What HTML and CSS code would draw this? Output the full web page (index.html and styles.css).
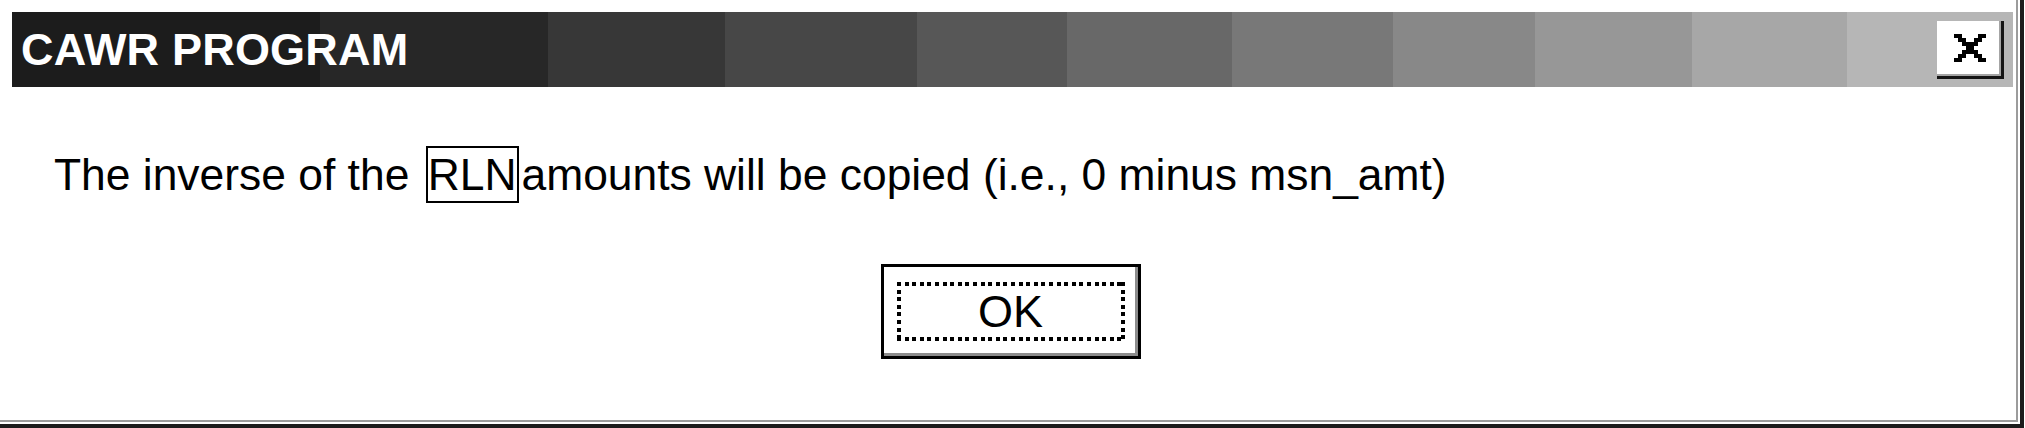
FILE: index.html
```html
<!DOCTYPE html>
<html lang="en">
<head>
<meta charset="utf-8">
<title>CAWR PROGRAM</title>
<link rel="stylesheet" href="styles.css">
</head>
<body>
<div class="window">
  <div class="frame">
    <div class="titlebar">
      <span class="title">CAWR PROGRAM</span>
      <button class="close" aria-label="Close">
        <svg class="close-glyph" viewBox="0 0 8 7" width="35" height="28" shape-rendering="crispEdges">
          <path d="M0 0h2v1H0z M6 0h2v1H6z M1 1h2v1H1z M5 1h2v1H5z M2 2h4v1H2z M3 3h2v1H3z M2 4h4v1H2z M1 5h2v1H1z M5 5h2v1H5z M0 6h2v1H0z M6 6h2v1H6z" fill="#000"/>
        </svg>
      </button>
    </div>
    <div class="body">
      <p class="message">The inverse of the <span class="tag">RLN</span>amounts will be copied (i.e., 0 minus msn_amt)</p>
      <div class="actions">
        <button class="ok"><span class="focus">OK</span></button>
      </div>
    </div>
  </div>
</div>
</body>
</html>
```

FILE: styles.css
```css
html, body {
  margin: 0;
  padding: 0;
  background: #ffffff;
}

body {
  font-family: "Liberation Sans", Arial, sans-serif;
  color: #000;
}

.window {
  width: 2024px;
  height: 428px;
  box-sizing: border-box;
  border-right: 4px solid #1c1c1c;
  border-bottom: 4px solid #1c1c1c;
  padding-right: 2px;
  padding-bottom: 2px;
  background: #fff;
}

.frame {
  height: 100%;
  box-sizing: border-box;
  border-right: 2px solid #9c9c9c;
  border-bottom: 2px solid #9c9c9c;
  display: flex;
  flex-direction: column;
}

.titlebar {
  margin: 12px 3px 0 12px;
  height: 75px;
  box-sizing: border-box;
  display: flex;
  align-items: center;
  justify-content: space-between;
  padding: 0 9px 0 9px;
  background: linear-gradient(90deg,
    #1c1c1c 0 308px,
    #272727 308px 536px,
    #373737 536px 713px,
    #474747 713px 905px,
    #575757 905px 1055px,
    #686868 1055px 1220px,
    #787878 1220px 1381px,
    #888888 1381px 1523px,
    #979797 1523px 1680px,
    #a7a7a7 1680px 1835px,
    #b6b6b6 1835px 100%);
}

.title {
  color: #fff;
  font-weight: bold;
  font-size: 45px;
  line-height: 1;
  letter-spacing: 0.2px;
}

.close {
  width: 67px;
  height: 58px;
  box-sizing: border-box;
  padding: 0;
  margin: 0;
  border: none;
  border-right: 3px solid #141414;
  border-bottom: 3px solid #141414;
  background: #fff;
  box-shadow: inset -2px -2px 0 #a4a4a4;
  display: flex;
  align-items: center;
  justify-content: center;
}

.close-glyph {
  display: block;
}

.body {
  display: flex;
  flex-direction: column;
}

.message {
  margin: 59px 0 0 54px;
  font-size: 44.4px;
  line-height: 57px;
  white-space: nowrap;
}

.tag {
  display: inline-block;
  border: 2px solid #000;
  padding: 0 1px 0 0;
  margin: 0 2px 0 4px;
  line-height: 53px;
}

.actions {
  margin-top: 61px;
  padding-left: 5px;
  display: flex;
  justify-content: center;
}

.ok {
  width: 260px;
  height: 95px;
  box-sizing: border-box;
  margin: 0;
  border: 3px solid #000;
  padding: 15px 13px;
  background: #fff;
  box-shadow: inset -3px -3px 0 #8c8c8c;
  display: flex;
  font: inherit;
  color: #000;
}

.focus {
  flex: 1;
  display: flex;
  align-items: center;
  justify-content: center;
  font-size: 45px;
  line-height: 1;
  background:
    repeating-linear-gradient(90deg, #000 0 4px, transparent 4px 7.6px) left top / 100% 4px no-repeat,
    repeating-linear-gradient(90deg, #000 0 4px, transparent 4px 7.6px) left bottom / 100% 4px no-repeat,
    repeating-linear-gradient(180deg, #000 0 4px, transparent 4px 7.6px) left top / 4px 100% no-repeat,
    repeating-linear-gradient(180deg, #000 0 4px, transparent 4px 7.6px) right top / 4px 100% no-repeat;
}
```
